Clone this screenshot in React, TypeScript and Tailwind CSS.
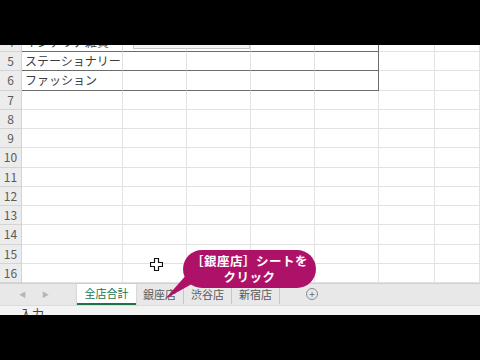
import React from "react";

const ROW_H = "h-[19.25px]";
const FONT = { fontFamily: '"Noto Sans CJK JP", "Liberation Sans", sans-serif' };

// column widths after the row header
const COLS = ["w-[101px]", "w-[64px]", "w-[64px]", "w-[64px]", "w-[64px]", "w-[56px]", "flex-1"];

const ROWS: { n: number; a?: string }[] = [
  { n: 4, a: "インテリア雑貨" },
  { n: 5, a: "ステーショナリー" },
  { n: 6, a: "ファッション" },
  ...Array.from({ length: 10 }, (_, i) => ({ n: 7 + i })),
];

function GridRow({ n, a }: { n: number; a?: string }) {
  // rows 4..6 form the bordered table (cols A..E)
  const inTable = n >= 4 && n <= 6;
  return (
    <div className={`flex ${ROW_H} shrink-0`}>
      <div className="w-[22px] shrink-0 bg-[#ececec] border-r border-b border-[#d4d4d4] flex items-center justify-center text-[12px] text-[#5a5a5a]">
        {n}
      </div>
      {COLS.map((w, i) => {
        const dark = inTable && i < 5;
        return (
          <div
            key={i}
            className={`${w} shrink-0 relative border-b border-r ${
              dark ? "border-b-[#6b6b6b]" : "border-b-[#e2e2e2]"
            } ${inTable && i === 4 ? "border-r-[#6b6b6b]" : "border-r-[#e2e2e2]"} flex items-center pl-[3px] text-[12px] text-[#3c3c3c] whitespace-nowrap`}
          >
            {i === 0 && a}
            {n === 4 && i === 1 && (
              <div className="absolute left-[10px] right-[-64px] bottom-[2px] h-[8px] border-x border-b border-[#c8c8c8] bg-[#f4f4f4]" />
            )}
          </div>
        );
      })}
    </div>
  );
}

function Tab({ label, active }: { label: string; active?: boolean }) {
  if (active) {
    return (
      <div className="w-[59px] h-[21px] bg-white border-b-2 border-[#217346] flex items-center justify-center text-[11px] text-[#217346] shadow-[0_1px_2px_rgba(0,0,0,0.2)]">
        {label}
      </div>
    );
  }
  return (
    <div className="w-[48px] h-[20px] border-r border-[#c6c6c6] flex items-center justify-center text-[11px] text-[#5a5a5a]">
      {label}
    </div>
  );
}

export default function App() {
  return (
    <div className="w-[480px] h-[360px] bg-black flex flex-col overflow-hidden" style={FONT}>
      <div className="h-[45px] shrink-0" />
      <div className="h-[270px] shrink-0 bg-white relative overflow-hidden flex flex-col">
        {/* sheet grid */}
        <div className="h-[238px] shrink-0 overflow-hidden">
          <div className="-mt-[12.25px] flex flex-col">
            {ROWS.map((r) => (
              <GridRow key={r.n} {...r} />
            ))}
          </div>
        </div>

        {/* sheet tabs */}
        <div className="h-[22px] shrink-0 bg-[#e8e8e8] border-t border-[#d0d0d0] flex items-start">
          <div className="w-[77px] h-[20px] flex items-center gap-[16px] pl-[19px] text-[7px] text-[#b5b5b5]">
            <span>◀</span>
            <span>▶</span>
          </div>
          <Tab label="全店合計" active />
          <Tab label="銀座店" />
          <Tab label="渋谷店" />
          <Tab label="新宿店" />
          <div className="ml-[26px] mt-[4px] w-[12px] h-[12px] rounded-full border border-[#8a8a8a] flex items-center justify-center text-[10px] leading-none text-[#666]">
            +
          </div>
        </div>

        {/* status bar */}
        <div className="flex-1 bg-[#f3f3f3] border-t border-[#dcdcdc] pl-[20px] pt-[1px] text-[12px] leading-[14px] text-[#444]">
          入力
        </div>

        {/* mouse cursor */}
        <svg className="absolute left-[150px] top-[213px]" width="13" height="13" viewBox="0 0 13 13">
          <path
            d="M4.5 0.5h4v4h4v4h-4v4h-4v-4h-4v-4h4z"
            fill="#fff"
            stroke="#111"
            strokeWidth="1.2"
            strokeLinejoin="round"
          />
        </svg>

        {/* callout */}
        <svg className="absolute left-[160px] top-[228px]" width="50" height="28" viewBox="0 0 50 28">
          <path d="M28 0 L48 2 L5 26 Z" fill="#ae1268" />
        </svg>
        <div className="absolute left-[183px] top-[205px] w-[133px] h-[38px] rounded-[19px] bg-[#ae1268] flex flex-col items-center justify-center text-white font-bold text-[12.5px] leading-[16px] tracking-[0.5px]">
          <span>［銀座店］シートを</span>
          <span>クリック</span>
        </div>
      </div>
      <div className="flex-1" />
    </div>
  );
}
